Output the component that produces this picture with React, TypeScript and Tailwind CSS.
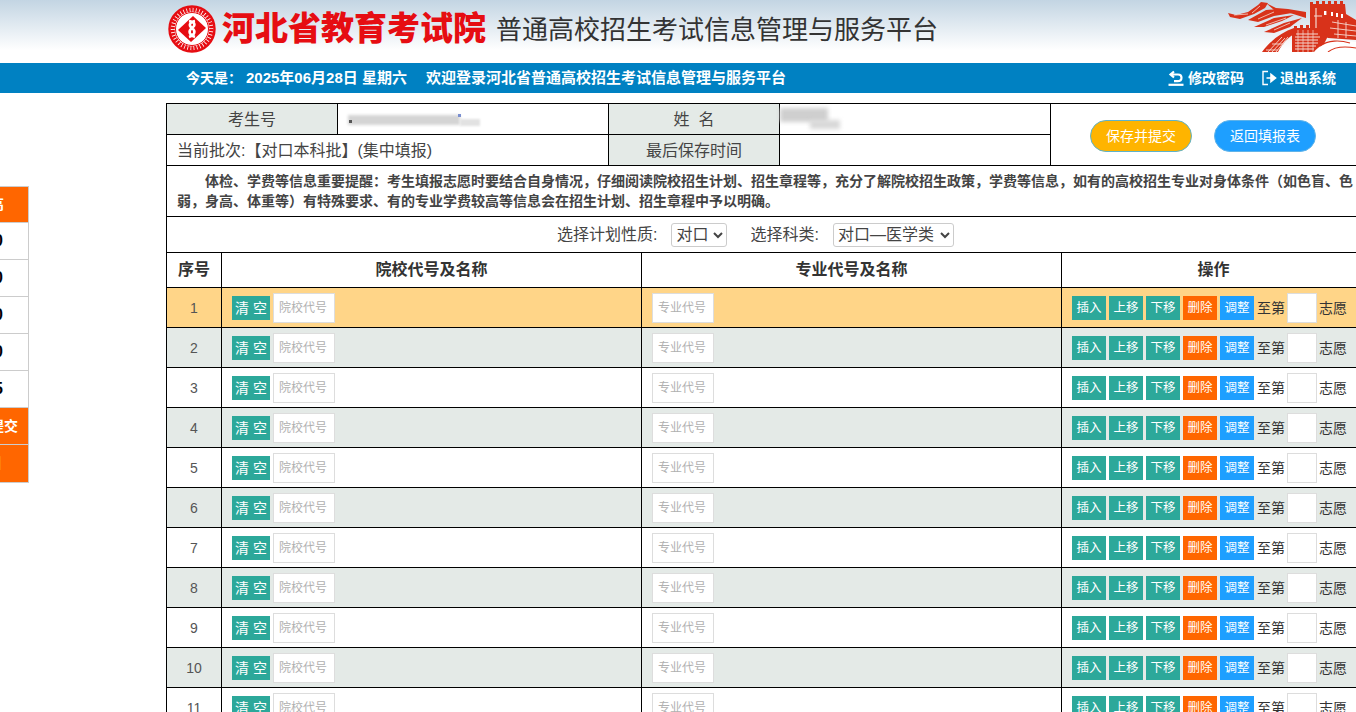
const font = "font-['Liberation_Sans','Noto_Sans_CJK_SC',sans-serif]";

const rows = [1, 2, 3, 4, 5, 6, 7, 8, 9, 10, 11];

const sideItems = [
  { text: '高', cls: 'h-[36px] pr-[24px]', orange: true },
  { text: '0', cls: 'h-[37px] pr-[25px]' },
  { text: '0', cls: 'h-[37px] pr-[25px]' },
  { text: '0', cls: 'h-[37px] pr-[25px]' },
  { text: '0', cls: 'h-[37px] pr-[25px]' },
  { text: '5', cls: 'h-[37px] pr-[25px]' },
  { text: '提交', cls: 'h-[37px] pr-[10px]', orange: true },
  { text: '回', cls: 'h-[37px] pr-[27px]', orange: true, yellow: true },
];

function Logo() {
  return (
    <svg width="48" height="48" viewBox="0 0 48 48" className="shrink-0">
      <circle cx="24" cy="24" r="22.5" fill="#fff" stroke="#e60d12" strokeWidth="2.4" />
      <circle cx="24" cy="24" r="19.5" fill="none" stroke="#e60d12" strokeWidth="4.5" strokeDasharray="2.4 0.8" />
      <circle cx="24" cy="24" r="16.5" fill="#fff" stroke="#e60d12" strokeWidth="1" />
      <path d="M25 11 L38 23 L23 37 L10 25 Z" fill="#e60d12" />
      <path d="M21 16 C27 17 28 20 24 23 C20 26 21 30 27 32 M27 16 C22 17 20 20 24 23 C28 26 27 30 21 32" fill="none" stroke="#fff" strokeWidth="2.6" />
    </svg>
  );
}

function GreatWall() {
  return (
    <svg width="128" height="52" viewBox="0 0 128 52" className="shrink-0">
      <g fill="#d8321a">
        <path d="M0 13 L8 15 L20 12 L30 5 L33 2 L40 3 L37 8 L26 14 L12 19 L2 17 Z" />
        <path d="M20 20 L38 10 L50 9 L64 13 L46 16 L30 22 Z" />
        <path d="M26 27 L46 18 L66 15 L54 21 L36 27 Z" />
        <path d="M36 32 L56 23 L74 18 L62 27 L46 33 Z" />
        <path d="M38 3 L48 8 L60 9 L78 12 L78 18 L62 13 L46 10 Z" />
        <path d="M82 5 V2 H85 V4 H88 V1 H91 V4 H94 V1 H97 V4 H100 V1 H103 V4 H106 V1 H109 V4 H112 V1 H115 V4 H117 L118 14 L128 20 V40 L100 38 L86 30 H82 Z" />
        <path d="M66 30 V26 H69 V28 H72 V25 H75 V28 H78 V25 H81 V28 H86 L100 36 L92 52 H64 V30 Z" />
        <path d="M34 52 C42 41 54 32 66 28 L68 33 C60 37 54 44 50 52 Z" />
      </g>
      <g stroke="#f6d8cf" fill="none">
        <path d="M6 15 L20 14 M24 13 L32 6 M30 19 L46 12 M38 25 L58 18 M46 30 L62 23" strokeWidth="0.8" />
        <path d="M68 34 H90 M67 37 H92 M67 40 H90 M67 43 H90 M67 46 H88 M67 49 H86" strokeWidth="1.1" />
        <path d="M70 30 V52 M75 30 V52 M80 30 V52 M85 30 V52" strokeWidth="0.7" />
        <path d="M40 52 L54 37 M44 52 L57 38 M48 52 L60 37 M38 50 H50 M44 44 H56" strokeWidth="0.9" />
        <path d="M104 22 L128 26 M102 28 L128 31 M106 34 L128 36 M110 20 V38 M118 22 V38" strokeWidth="0.9" />
        <path d="M88 8 V28 M86 16 H94" strokeWidth="1.2" />
      </g>
      <rect x="96" y="11" width="2.4" height="4" fill="#fff" />
      <rect x="103" y="12" width="2" height="4" fill="#fff" />
      <rect x="108" y="13" width="2" height="4" fill="#fff" />
      <rect x="113" y="14" width="2" height="4" fill="#fff" />
      <path d="M86 52 C92 44 104 38 128 42 L128 52 Z" fill="#fff" />
      <path d="M92 46 C100 40 112 40 122 43 M100 52 C106 47 116 46 128 48" stroke="#d8321a" strokeWidth="1.1" fill="none" />
    </svg>
  );
}

function RowButton({ label, color }: { label: string; color: string }) {
  return (
    <button className={`w-[34px] h-[24px] text-[12.5px] text-white leading-[24px] text-center ${color}`}>
      {label}
    </button>
  );
}

export default function App() {
  return (
    <div className={`relative w-[1356px] h-[712px] overflow-hidden bg-white text-[#333] ${font}`}>
      <div className="h-[63px] bg-gradient-to-b from-[#c3d5e3] to-white to-[80%] flex items-start pl-[168px]">
        <div className="mt-[5px]"><Logo /></div>
        <div className="ml-[6px] mt-[6px] text-[33px] leading-[46px] font-black text-[#e60d12] whitespace-nowrap">
          河北省教育考试院
        </div>
        <div className="ml-[10px] mt-[9px] text-[26px] leading-[42px] text-[#333] whitespace-nowrap">
          普通高校招生考试信息管理与服务平台
        </div>
        <div className="ml-auto"><GreatWall /></div>
      </div>

      <div className="h-[30px] bg-[#0081c2] flex items-center pl-[186px] pr-[20px] text-white text-[14px] font-bold whitespace-nowrap">
        <span className="w-[60px]">今天是：</span>
        <span className="text-[15px] w-[180px]">2025年06月28日 星期六</span>
        <span className="text-[15px]">欢迎登录河北省普通高校招生考试信息管理与服务平台</span>
        <div className="ml-auto flex items-center">
          <svg width="16" height="16" viewBox="0 0 16 16" fill="none" stroke="#fff" strokeWidth="2.2">
            <path d="M6 1.5 L2.5 4.5 L6 7.5 M3 4.5 H10 C12.5 4.5 13.5 6 13.5 7.8 C13.5 9.8 12 11.2 9.5 11.2 H6" />
            <path d="M0.5 14.8 H15.5" />
          </svg>
          <span className="ml-[4px]">修改密码</span>
          <svg width="16" height="16" viewBox="0 0 16 16" fill="none" stroke="#fff" strokeWidth="1.4" className="ml-[17px]">
            <path d="M7 1.5 H2 V14.5 H7" />
            <path d="M5.5 8 H10 M10 4.5 L14.5 8 L10 11.5 Z" fill="#fff" strokeWidth="1.6" />
          </svg>
          <span className="ml-[3px]">退出系统</span>
        </div>
      </div>

      <div className="w-[1200px] ml-[166px] mt-[10px]">
        <table className="w-full table-fixed border-collapse border border-black text-[16px] text-[#444]">
          <colgroup>
            <col className="w-[171px]" />
            <col className="w-[271px]" />
            <col className="w-[171px]" />
            <col className="w-[271px]" />
            <col />
          </colgroup>
          <tbody>
            <tr className="h-[31px]">
              <td className="border border-black bg-[#e4eae7] text-center pt-[1px]">考生号</td>
              <td className="border border-black pl-[10px]">
                <div className="relative h-[14px] mt-[2px] flex items-center">
                  <div className="w-[112px] h-[10px] bg-[#d4d4d4] blur-[1.5px]" />
                  <div className="w-[20px] h-[7px] mt-[4px] bg-[#e2e2e2] blur-[1px]" />
                  <div className="absolute left-[1px] top-[7px] w-[3px] h-[3px] bg-[#555] blur-[0.5px]" />
                  <div className="absolute left-[110px] top-[1px] w-[3px] h-[3px] bg-[#7a8fd0] blur-[0.5px]" />
                </div>
              </td>
              <td className="border border-black bg-[#e4eae7] text-center whitespace-pre pt-[1px]">姓  名</td>
              <td className="border border-black">
                <div className="relative h-[24px]">
                  <div className="w-[48px] h-[14px] mt-[2px] bg-[#cfcfcf] blur-[2px]" />
                  <div className="absolute left-[30px] top-[12px] w-[30px] h-[9px] bg-[#d8d8d8] blur-[2px]" />
                </div>
              </td>
              <td rowSpan={2} className="border border-black pt-[3px]">
                <div className="flex items-center pl-[39px] gap-[22px]">
                  <button className="w-[102px] h-[32px] rounded-[16px] bg-[#ffb400] border border-[#5fb3c9] text-white text-[14px]">保存并提交</button>
                  <button className="w-[102px] h-[32px] rounded-[16px] bg-[#1e9fff] border border-[#5fb3e9] text-white text-[14px]">返回填报表</button>
                </div>
              </td>
            </tr>
            <tr className="h-[31px]">
              <td colSpan={2} className="border border-black pl-[10px] pt-[1px]">当前批次:【对口本科批】(集中填报)</td>
              <td className="border border-black bg-[#e4eae7] text-center pt-[1px]">最后保存时间</td>
              <td className="border border-black" />
            </tr>
          </tbody>
        </table>

        <div className="w-full h-[51px] border-x border-b border-black px-[10px] pt-[5px] text-[14px] leading-[20px] font-bold text-[#444] overflow-hidden">
          <div className="w-[1178px] indent-[28px]">
            体检、学费等信息重要提醒：考生填报志愿时要结合自身情况，仔细阅读院校招生计划、招生章程等，充分了解院校招生政策，学费等信息，如有的高校招生专业对身体条件（如色盲、色弱，身高、体重等）有特殊要求、有的专业学费较高等信息会在招生计划、招生章程中予以明确。
          </div>
        </div>

        <div className="h-[36px] border-x border-b border-black flex items-center pl-[390px] text-[16px] text-[#444]">
          <span>选择计划性质:</span>
          <select className="ml-[14px] w-[56px] h-[24px] border border-[#ccc] rounded-[3px] bg-white text-[16px]">
            <option>对口</option>
          </select>
          <span className="ml-[23px]">选择科类:</span>
          <select className="ml-[14px] w-[121px] h-[24px] border border-[#ccc] rounded-[3px] bg-white text-[16px]">
            <option>对口—医学类</option>
          </select>
        </div>

        <table className="w-full table-fixed border-collapse border-x border-black text-[14px]">
          <colgroup>
            <col className="w-[55px]" />
            <col className="w-[420px]" />
            <col className="w-[420px]" />
            <col />
          </colgroup>
          <thead>
            <tr className="h-[34px] text-[16px]">
              <th className="border border-black border-t-0 font-bold">序号</th>
              <th className="border border-black border-t-0 font-bold">院校代号及名称</th>
              <th className="border border-black border-t-0 font-bold">专业代号及名称</th>
              <th className="border border-black border-t-0 font-bold">操作</th>
            </tr>
          </thead>
          <tbody>
            {rows.map((n) => (
              <tr key={n} className={`h-[40px] ${n === 1 ? 'bg-[#ffd588]' : n % 2 === 0 ? 'bg-[#e4eae7]' : 'bg-white'}`}>
                <td className="border border-black text-center text-[#555] pt-[2px]">{n}</td>
                <td className="border border-black pl-[10px] pt-[2px]">
                  <div className="flex items-center gap-[3px]">
                    <button className="w-[38px] h-[24px] bg-[#2ca89a] text-white text-[14px] leading-[24px]">清 空</button>
                    <input placeholder="院校代号" className="w-[62px] h-[30px] border border-[#ddd] bg-white text-[12px] px-[5px] placeholder:text-[#b0b0b0]" />
                  </div>
                </td>
                <td className="border border-black pl-[10px] pt-[2px]">
                  <input placeholder="专业代号" className="block w-[62px] h-[30px] border border-[#ddd] bg-white text-[12px] px-[5px] placeholder:text-[#b0b0b0]" />
                </td>
                <td className="border border-black pl-[10px] pt-[2px]">
                  <div className="flex items-center gap-[3px] whitespace-nowrap">
                    <RowButton label="插入" color="bg-[#2ca89a]" />
                    <RowButton label="上移" color="bg-[#2ca89a]" />
                    <RowButton label="下移" color="bg-[#2ca89a]" />
                    <RowButton label="删除" color="bg-[#ff6600]" />
                    <RowButton label="调整" color="bg-[#1e9fff]" />
                    <span className="text-[14px]">至第</span>
                    <input className="w-[30px] h-[30px] border border-[#ddd] bg-white -mx-px" />
                    <span className="text-[14px]">志愿</span>
                  </div>
                </td>
              </tr>
            ))}
          </tbody>
        </table>
      </div>

      <div className="absolute left-[-100px] top-[186px] w-[129px] border border-[#ccc] text-[16px] font-bold text-black">
        {sideItems.map((item, i) => (
          <div
            key={i}
            className={`flex items-center justify-end whitespace-nowrap ${item.cls} ${i < sideItems.length - 1 ? 'border-b border-[#ccc]' : ''} ${item.orange ? 'bg-[#ff6600] text-white text-[14px]' : 'bg-white'} ${item.yellow ? 'text-[#ffc000]' : ''}`}
          >
            {item.text}
          </div>
        ))}
      </div>
    </div>
  );
}
